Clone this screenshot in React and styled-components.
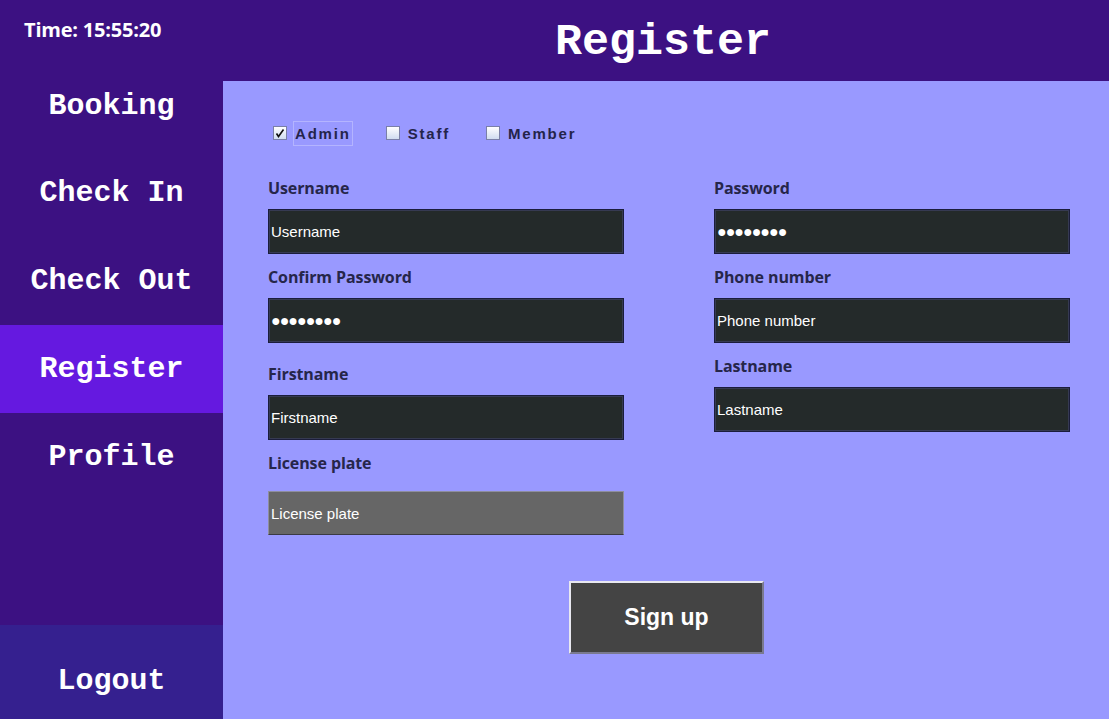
import React from 'react';
import styled, { createGlobalStyle } from 'styled-components';

const GlobalStyle = createGlobalStyle`
  html, body {
    margin: 0;
    padding: 0;
    background: #9999ff;
  }
  * {
    box-sizing: border-box;
  }
`;

const Shell = styled.div`
  display: grid;
  grid-template-columns: 223px 1fr;
  width: 1109px;
  height: 719px;
  overflow: hidden;
`;

const Sidebar = styled.aside`
  display: flex;
  flex-direction: column;
  background: #3c1182;
`;

const Clock = styled.div`
  height: 61px;
  padding: 16px 0 0 24px;
  font-family: 'Open Sans', sans-serif;
  font-weight: 700;
  font-size: 20px;
  color: #ffffff;
  letter-spacing: -0.2px;
`;

const NavItem = styled.div`
  height: 88px;
  display: flex;
  align-items: center;
  justify-content: center;
  padding-top: ${(p) => (p.$first ? 2 : 0)}px;
  font-family: 'Liberation Mono', monospace;
  font-weight: 700;
  font-size: 30px;
  color: #ffffff;
  background: ${(p) => (p.$active ? '#6519e0' : 'transparent')};
`;

const Logout = styled(NavItem)`
  margin-top: auto;
  height: 94px;
  padding-top: 18px;
  background: #35208f;
`;

const Content = styled.div`
  display: flex;
  flex-direction: column;
`;

const Header = styled.header`
  height: 81px;
  display: flex;
  align-items: center;
  justify-content: center;
  background: #3c1182;
  font-family: 'Liberation Mono', monospace;
  font-weight: 700;
  font-size: 45px;
  color: #ffffff;
  padding: 4px 6px 0 0;
`;

const Main = styled.main`
  flex: 1;
  background: #9999ff;
  padding: 40px 39px 0 45px;
  display: flex;
  flex-direction: column;
`;

const RoleRow = styled.div`
  display: flex;
  align-items: center;
  height: 24px;
  padding-left: 5px;
  margin-bottom: 32px;
`;

const Role = styled.label`
  display: flex;
  align-items: center;
  gap: 6px;
  margin-right: ${(p) => p.$gap || 0}px;
`;

const Box = styled.span`
  width: 14px;
  height: 14px;
  border: 1px solid #7a80a8;
  background: linear-gradient(#ffffff, #d0dcf0);
  display: flex;
  align-items: center;
  justify-content: center;
`;

const RoleText = styled.span`
  font-family: 'Liberation Sans', Arial, sans-serif;
  font-weight: 700;
  font-size: 15px;
  letter-spacing: 1.8px;
  color: #24244a;
  padding: 3px 1px;
  border: 1px solid ${(p) => (p.$focus ? '#b4b4ff' : 'transparent')};
`;

const Columns = styled.div`
  display: flex;
  gap: 90px;
`;

const Column = styled.div`
  width: 356px;
  display: flex;
  flex-direction: column;
`;

const Field = styled.div`
  display: flex;
  flex-direction: column;
  margin-top: ${(p) => p.$top ?? 12}px;
`;

const Label = styled.div`
  height: 22px;
  line-height: 22px;
  font-family: 'Open Sans', sans-serif;
  font-weight: 700;
  font-size: 16px;
  letter-spacing: -0.1px;
  color: #26264a;
  margin-bottom: ${(p) => p.$below ?? 10}px;
`;

const Input = styled.input`
  width: 356px;
  height: ${(p) => p.$h || 45}px;
  margin: 0;
  padding: 0 2px;
  font-family: 'Liberation Sans', Arial, sans-serif;
  font-size: ${(p) => (p.$dots ? 16 : 15)}px;
  letter-spacing: ${(p) => (p.$dots ? '-1px' : '0')};
  color: #ffffff;
  outline: none;
  background: ${(p) => (p.$muted ? '#666666' : '#242a2a')};
  border: 1px solid ${(p) => (p.$muted ? '#8e8e9e' : '#1b1d3c')};
  border-bottom-color: ${(p) => (p.$muted ? '#3a3a44' : '#1b1d3c')};
  box-shadow: ${(p) => (p.$muted ? 'none' : 'inset 0 0 0 1px #363a52')};
`;

const Actions = styled.div`
  display: flex;
  justify-content: center;
  margin: 46px 5px 0 0;
`;

const SignUp = styled.button`
  width: 195px;
  height: 73px;
  background: #444444;
  color: #ffffff;
  font-family: 'Liberation Sans', Arial, sans-serif;
  font-weight: 700;
  font-size: 23px;
  border: 2px solid;
  border-color: #e8e8f0 #7a7a90 #7a7a90 #e8e8f0;
  cursor: pointer;
`;

const Check = () => (
  <svg width="10" height="10" viewBox="0 0 10 10">
    <path d="M1.5 5.5 L3.5 8.5 L8.5 1.5" fill="none" stroke="#111" strokeWidth="1.6" />
  </svg>
);

const navItems = ['Booking', 'Check In', 'Check Out', 'Register', 'Profile'];

const App = () => (
  <>
    <GlobalStyle />
    <Shell>
      <Sidebar>
        <Clock>Time: 15:55:20</Clock>
        {navItems.map((item, i) => (
          <NavItem key={item} $first={i === 0} $active={item === 'Register'}>
            {item}
          </NavItem>
        ))}
        <Logout>Logout</Logout>
      </Sidebar>
      <Content>
        <Header>Register</Header>
        <Main>
          <RoleRow>
            <Role $gap={33}>
              <Box><Check /></Box>
              <RoleText $focus>Admin</RoleText>
            </Role>
            <Role $gap={34}>
              <Box />
              <RoleText>Staff</RoleText>
            </Role>
            <Role>
              <Box />
              <RoleText>Member</RoleText>
            </Role>
          </RoleRow>
          <Columns>
            <Column>
              <Field $top={0}>
                <Label>Username</Label>
                <Input defaultValue="Username" />
              </Field>
              <Field>
                <Label>Confirm Password</Label>
                <Input $dots defaultValue="●●●●●●●●" />
              </Field>
              <Field $top={20}>
                <Label>Firstname</Label>
                <Input defaultValue="Firstname" />
              </Field>
              <Field>
                <Label $below={17}>License plate</Label>
                <Input $muted $h={44} defaultValue="License plate" />
              </Field>
            </Column>
            <Column>
              <Field $top={0}>
                <Label>Password</Label>
                <Input $dots defaultValue="●●●●●●●●" />
              </Field>
              <Field>
                <Label>Phone number</Label>
                <Input defaultValue="Phone number" />
              </Field>
              <Field>
                <Label>Lastname</Label>
                <Input defaultValue="Lastname" />
              </Field>
            </Column>
          </Columns>
          <Actions>
            <SignUp>Sign up</SignUp>
          </Actions>
        </Main>
      </Content>
    </Shell>
  </>
);

export default App;
